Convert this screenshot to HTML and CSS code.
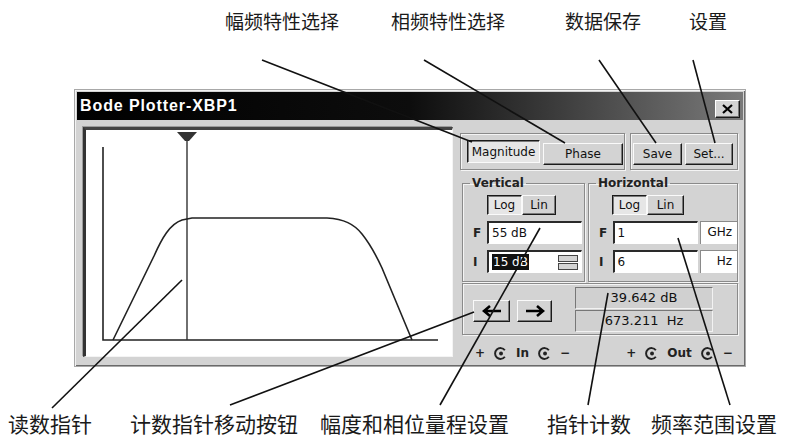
FILE: index.html
```html
<!DOCTYPE html>
<html lang="zh-CN">
<head>
    <meta charset="UTF-8">
    <meta name="viewport" content="width=device-width, initial-scale=1.0">
    <title>Bode Plotter</title>
    <link rel="stylesheet" href="styles.css">
</head>
<body>
    <div class="figure">
        <div class="top-labels">
            <span class="lbl lbl-mag">幅频特性选择</span>
            <span class="lbl lbl-phase">相频特性选择</span>
            <span class="lbl lbl-save">数据保存</span>
            <span class="lbl lbl-set">设置</span>
        </div>

        <div class="window">
            <div class="titlebar">
                <span class="title">Bode Plotter-XBP1</span>
                <button class="close" type="button">
                    <svg width="11" height="10" viewBox="0 0 11 10"><path d="M1 1 L10 9 M10 1 L1 9" stroke="#000" stroke-width="2.2"/></svg>
                </button>
            </div>

            <div class="window-body">
                <div class="plot-panel">
                    <svg class="plot" width="366" height="226" viewBox="0 0 366 226">
                        <path d="M17 17 L17 210 L352 210" fill="none" stroke="#222" stroke-width="1.6"/>
                        <line x1="101" y1="2" x2="101" y2="210" stroke="#333" stroke-width="1.4"/>
                        <polygon points="91,2 111,2 103,11 99,11" fill="#333"/>
                        <path d="M27 210 L68 126 C76 108 84 94 96 90 L106 88 L241 88 C258 89 268 94 276 104 C284 114 290 125 296 138 L326 210"
                              fill="none" stroke="#222" stroke-width="1.6"/>
                    </svg>
                </div>

                <div class="controls">
                    <div class="mode-row">
                        <div class="etched mode-group">
                            <button class="btn pressed btn-mag" type="button">Magnitude</button>
                            <button class="btn btn-phase" type="button">Phase</button>
                        </div>
                        <div class="etched file-group">
                            <button class="btn btn-save" type="button">Save</button>
                            <button class="btn btn-set" type="button">Set...</button>
                        </div>
                    </div>

                    <div class="scale-row">
                        <fieldset class="etched axis axis-v">
                            <legend>Vertical</legend>
                            <div class="loglin">
                                <button class="btn pressed btn-log" type="button">Log</button>
                                <button class="btn btn-lin" type="button">Lin</button>
                            </div>
                            <div class="field-row">
                                <span class="flabel">F</span>
                                <div class="field field-v">55 dB</div>
                            </div>
                            <div class="field-row">
                                <span class="flabel">I</span>
                                <div class="field field-v">
                                    <span class="selected">15 dB</span>
                                    <span class="spin"><i></i><i></i></span>
                                </div>
                            </div>
                        </fieldset>

                        <fieldset class="etched axis axis-h">
                            <legend>Horizontal</legend>
                            <div class="loglin">
                                <button class="btn pressed btn-log" type="button">Log</button>
                                <button class="btn btn-lin" type="button">Lin</button>
                            </div>
                            <div class="field-row">
                                <span class="flabel">F</span>
                                <div class="field field-h">1</div>
                                <div class="unit">GHz</div>
                            </div>
                            <div class="field-row">
                                <span class="flabel">I</span>
                                <div class="field field-h">6</div>
                                <div class="unit">Hz</div>
                            </div>
                        </fieldset>
                    </div>

                    <div class="etched readout-row">
                        <div class="arrows">
                            <button class="btn arrow" type="button">
                                <svg width="20" height="12" viewBox="0 0 20 12"><path d="M19 6 H3 M8 1 L2 6 L8 11" fill="none" stroke="#000" stroke-width="2.6"/></svg>
                            </button>
                            <button class="btn arrow arrow-r" type="button">
                                <svg width="20" height="12" viewBox="0 0 20 12"><path d="M1 6 H17 M12 1 L18 6 L12 11" fill="none" stroke="#000" stroke-width="2.6"/></svg>
                            </button>
                        </div>
                        <div class="readouts">
                            <div class="readout">39.642 dB</div>
                            <div class="readout">673.211&nbsp; Hz</div>
                        </div>
                    </div>

                    <div class="terminals">
                        <div class="term">
                            <span>+</span>
                            <svg class="jack" width="13" height="13" viewBox="0 0 12 12"><path d="M10 3 A5 5 0 1 0 10 9" fill="none" stroke="#222" stroke-width="1.8"/><circle cx="6.5" cy="6" r="1.8" fill="#222"/></svg>
                            <span>In</span>
                            <svg class="jack" width="13" height="13" viewBox="0 0 12 12"><path d="M10 3 A5 5 0 1 0 10 9" fill="none" stroke="#222" stroke-width="1.8"/><circle cx="6.5" cy="6" r="1.8" fill="#222"/></svg>
                            <span>&minus;</span>
                        </div>
                        <div class="term">
                            <span>+</span>
                            <svg class="jack" width="13" height="13" viewBox="0 0 12 12"><path d="M10 3 A5 5 0 1 0 10 9" fill="none" stroke="#222" stroke-width="1.8"/><circle cx="6.5" cy="6" r="1.8" fill="#222"/></svg>
                            <span>Out</span>
                            <svg class="jack" width="13" height="13" viewBox="0 0 12 12"><path d="M10 3 A5 5 0 1 0 10 9" fill="none" stroke="#222" stroke-width="1.8"/><circle cx="6.5" cy="6" r="1.8" fill="#222"/></svg>
                            <span>&minus;</span>
                        </div>
                    </div>
                </div>
            </div>
        </div>

        <div class="bottom-labels">
            <span class="lbl lbl-cursor">读数指针</span>
            <span class="lbl lbl-move">计数指针移动按钮</span>
            <span class="lbl lbl-range">幅度和相位量程设置</span>
            <span class="lbl lbl-count">指针计数</span>
            <span class="lbl lbl-freq">频率范围设置</span>
        </div>

        <!-- leader lines from the captions to the controls -->
        <svg class="leaders" width="795" height="446" viewBox="0 0 795 446">
            <g stroke="#111" stroke-width="1.6">
                <line x1="262" y1="60" x2="472" y2="142"/>
                <line x1="424" y1="60" x2="565" y2="143"/>
                <line x1="599" y1="60" x2="656" y2="143"/>
                <line x1="693" y1="60" x2="715" y2="143"/>
                <line x1="52" y1="408" x2="182" y2="280"/>
                <line x1="230" y1="405" x2="474" y2="312"/>
                <line x1="440" y1="405" x2="540" y2="228"/>
                <line x1="588" y1="405" x2="608" y2="293"/>
                <line x1="730" y1="405" x2="678" y2="238"/>
            </g>
        </svg>
    </div>
</body>
</html>
```

FILE: styles.css
```css
body {
    margin: 0;
    background-color: #fff;
    color: #111;
    font-family: 'DejaVu Sans', sans-serif;
}

.figure {
    position: relative;
    width: 795px;
    height: 446px;
    overflow: hidden;
}

.lbl {
    font-family: 'Noto Sans CJK SC', sans-serif;
    color: #1a1a1a;
    white-space: nowrap;
}

.top-labels {
    display: flex;
    height: 89px;
    padding-top: 8px;
    box-sizing: border-box;
    font-size: 19px;
    line-height: 26px;
}

.lbl-mag { margin-left: 225px; }
.lbl-phase { margin-left: 52px; }
.lbl-save { margin-left: 60px; }
.lbl-set { margin-left: 48px; }

.bottom-labels {
    display: flex;
    margin-top: 43px;
    font-size: 21px;
    line-height: 26px;
}

.lbl-cursor { margin-left: 8px; }
.lbl-move { margin-left: 38px; }
.lbl-range { margin-left: 22px; }
.lbl-count { margin-left: 38px; }
.lbl-freq { margin-left: 20px; }

.leaders {
    position: absolute;
    top: 0;
    left: 0;
    pointer-events: none;
}

/* window */
.window {
    margin-left: 74px;
    width: 672px;
    height: 278px;
    box-sizing: border-box;
    padding: 2px;
    background-color: #d3d3d3;
    border: 1px solid #a8a8a8;
    box-shadow: inset 1px 1px 0 #f2f2f2, inset -1px -1px 0 #6a6a6a;
}

.titlebar {
    display: flex;
    align-items: center;
    justify-content: space-between;
    height: 28px;
    padding: 0 3px 0 3px;
    background: linear-gradient(to right, #000 0%, #0d0d0d 50%, #3c3c3c 72%, #7a7a7a 100%);
}

.title {
    color: #fff;
    font-family: 'Liberation Sans', sans-serif;
    font-weight: bold;
    font-size: 16px;
    letter-spacing: 0.9px;
}

.close {
    display: flex;
    align-items: center;
    justify-content: center;
    width: 25px;
    height: 18px;
    margin-top: 5px;
    padding: 0;
    background-color: #d3d3d3;
    border: 1px solid;
    border-color: #fff #1a1a1a #1a1a1a #fff;
    box-shadow: inset -1px -1px 0 #777;
}

.window-body {
    display: flex;
    align-items: flex-start;
    gap: 7px;
    padding: 7px 0 0 6px;
}

.plot-panel {
    width: 370px;
    height: 230px;
    box-sizing: border-box;
    background-color: #fff;
    border-style: solid;
    border-width: 3px 1px 1px 3px;
    border-color: #444 #f4f4f4 #f4f4f4 #333;
    box-shadow: -1px -1px 0 #9c9c9c;
}

.plot {
    display: block;
}

/* control side */
.controls {
    width: 280px;
    margin-top: 6px;
    font-size: 12px;
}

.etched {
    box-sizing: border-box;
    border: 1px solid #8a8a8a;
    box-shadow: inset 1px 1px 0 #f4f4f4, 1px 1px 0 #f4f4f4;
}

.btn {
    box-sizing: border-box;
    padding: 0;
    font-family: 'DejaVu Sans', sans-serif;
    font-size: 12px;
    color: #111;
    background-color: #d3d3d3;
    border: 1px solid;
    border-color: #fafafa #1a1a1a #1a1a1a #fafafa;
    box-shadow: inset -1px -1px 0 #7a7a7a;
}

.btn.pressed {
    background-color: #e6e6e6;
    border-color: #1a1a1a #fafafa #fafafa #1a1a1a;
    box-shadow: inset 1px 1px 0 #7a7a7a;
}

.mode-row {
    display: flex;
    gap: 5px;
    height: 37px;
}

.mode-group {
    display: flex;
    align-items: flex-start;
    gap: 3px;
    width: 165px;
    padding: 6px 0 0 6px;
}

.btn-mag {
    width: 73px;
    height: 23px;
}

.btn-phase {
    width: 80px;
    height: 22px;
    margin-top: 3px;
}

.file-group {
    display: flex;
    align-items: flex-start;
    gap: 3px;
    width: 108px;
    padding: 9px 0 0 2px;
}

.btn-save {
    width: 49px;
    height: 22px;
}

.btn-set {
    width: 48px;
    height: 22px;
}

.scale-row {
    display: flex;
    gap: 3px;
    height: 106px;
    margin: 6px 0 0 2px;
}

fieldset.axis {
    margin: 0;
    min-width: 0;
    padding: 5px 0 0 10px;
}

.axis legend {
    padding: 0 2px;
    margin-left: -3px;
    font-size: 12px;
    line-height: 14px;
    font-weight: bold;
    color: #222;
}

.axis-v {
    width: 123px;
}

.axis-h {
    width: 150px;
    padding-left: 4px;
}

.loglin {
    display: flex;
    height: 20px;
    margin-left: 14px;
}

.axis-h .loglin {
    margin-left: 13px;
}

.btn-log {
    width: 35px;
    height: 20px;
}

.btn-lin {
    width: 34px;
    height: 20px;
}

.axis-h .btn-lin {
    width: 37px;
}

.field-row {
    display: flex;
    align-items: center;
    height: 23px;
    margin-top: 6px;
}

.flabel {
    width: 14px;
    font-weight: bold;
    font-size: 12px;
    color: #222;
}

.field {
    display: flex;
    align-items: center;
    justify-content: space-between;
    box-sizing: border-box;
    height: 23px;
    padding-left: 3px;
    background-color: #fff;
    border-style: solid;
    border-width: 2px 1px 1px 2px;
    border-color: #2a2a2a #fff #fff #2a2a2a;
}

.field-v {
    width: 95px;
}

.field-h {
    width: 88px;
}

.selected {
    background-color: #111;
    color: #fff;
    padding: 1px 1px;
}

.spin {
    display: flex;
    flex-direction: column;
    width: 20px;
    height: 15px;
    margin-right: 3px;
    gap: 1px;
}

.spin i {
    flex: 1;
    background-color: #d3d3d3;
    border: 1px solid #444;
}

.unit {
    box-sizing: border-box;
    width: 38px;
    height: 23px;
    margin-left: 2px;
    padding-right: 5px;
    line-height: 21px;
    text-align: right;
    background-color: #fff;
    border-top: 1px solid #8a8a8a;
    border-left: 1px solid #8a8a8a;
}

.readout-row {
    display: flex;
    align-items: flex-start;
    width: 276px;
    height: 52px;
    margin: 1px 0 0 2px;
    padding: 16px 0 0 10px;
}

.arrows {
    display: flex;
    gap: 7px;
}

.arrow {
    display: flex;
    align-items: center;
    justify-content: center;
    width: 37px;
    height: 22px;
}

.arrow-r {
    width: 35px;
}

.readouts {
    width: 138px;
    margin: -13px 0 0 23px;
}

.readout {
    box-sizing: border-box;
    height: 22px;
    line-height: 20px;
    text-align: center;
    font-size: 13px;
    background-color: #d0d0d0;
    border: 1px solid;
    border-color: #777 #f2f2f2 #f2f2f2 #777;
}

.readout + .readout {
    margin-top: 1px;
}

.terminals {
    display: flex;
    gap: 56px;
    margin: 11px 0 0 15px;
    font-size: 12px;
    font-weight: bold;
    color: #222;
}

.term {
    display: flex;
    align-items: center;
    gap: 9px;
}
```
